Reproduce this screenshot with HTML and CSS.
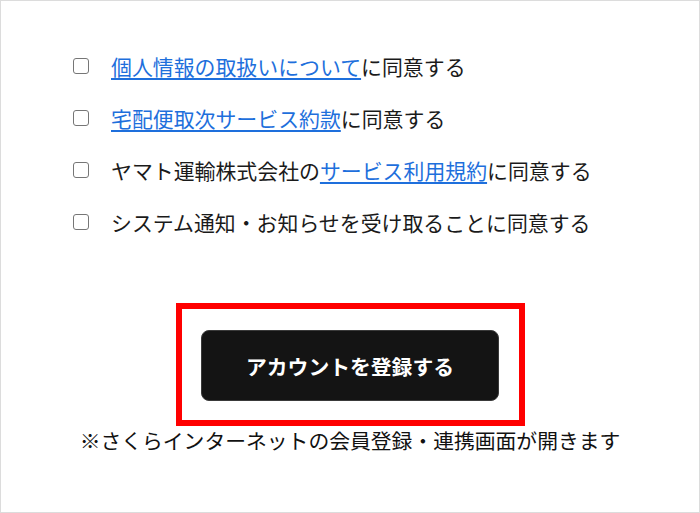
FILE: index.html
```html
<!DOCTYPE html>
<html lang="ja">
<head>
<meta charset="utf-8">
<link rel="stylesheet" href="styles.css">
</head>
<body>
<div class="frame">
  <ul class="agree-list">
    <li class="agree-item"><span class="box"></span><span class="label"><a href="#">個人情報の取扱いについて</a>に同意する</span></li>
    <li class="agree-item"><span class="box"></span><span class="label"><a href="#">宅配便取次サービス約款</a>に同意する</span></li>
    <li class="agree-item"><span class="box"></span><span class="label">ヤマト運輸株式会社の<a href="#">サービス利用規約</a>に同意する</span></li>
    <li class="agree-item"><span class="box"></span><span class="label">システム通知・お知らせを受け取ることに同意する</span></li>
  </ul>
  <div class="highlight">
    <button class="submit">アカウントを登録する</button>
  </div>
  <p class="note">※さくらインターネットの会員登録・連携画面が開きます</p>
</div>
</body>
</html>
```

FILE: styles.css
```css
html, body {
  margin: 0;
  padding: 0;
  background: #fff;
}
.frame {
  box-sizing: border-box;
  width: 700px;
  height: 513px;
  border: 1px solid #dcdcdc;
  font-family: "Noto Sans CJK JP", "Noto Sans", sans-serif;
  color: #1a1a1a;
  display: flex;
  flex-direction: column;
  align-items: center;
}
.agree-list {
  list-style: none;
  margin: 0;
  padding: 50px 0 0 72px;
  align-self: stretch;
  display: flex;
  flex-direction: column;
  gap: 22px;
}
.agree-item {
  display: flex;
  align-items: center;
  height: 30px;
  font-size: 20.9px;
}
.box {
  box-sizing: border-box;
  width: 16px;
  height: 16px;
  border: 1.5px solid #767676;
  border-radius: 3px;
  margin-right: 22px;
  flex: none;
}
.label a {
  color: #1e6fdc;
  text-decoration: underline;
  text-underline-offset: 3px;
}
.highlight {
  margin-top: 66px;
  border: 6px solid #f00;
  width: 337px;
  height: 111px;
  display: flex;
  align-items: center;
  justify-content: center;
}
.submit {
  width: 298px;
  height: 71px;
  background: #141414;
  border: 1px solid #3a3a3a;
  border-radius: 8px;
  color: #fff;
  font-family: "Noto Sans CJK JP", sans-serif;
  font-weight: 700;
  font-size: 20.8px;
  margin-top: 2px;
}
.note {
  margin: 0;
  font-size: 20.8px;
  line-height: 28px;
  color: #111;
}
```
